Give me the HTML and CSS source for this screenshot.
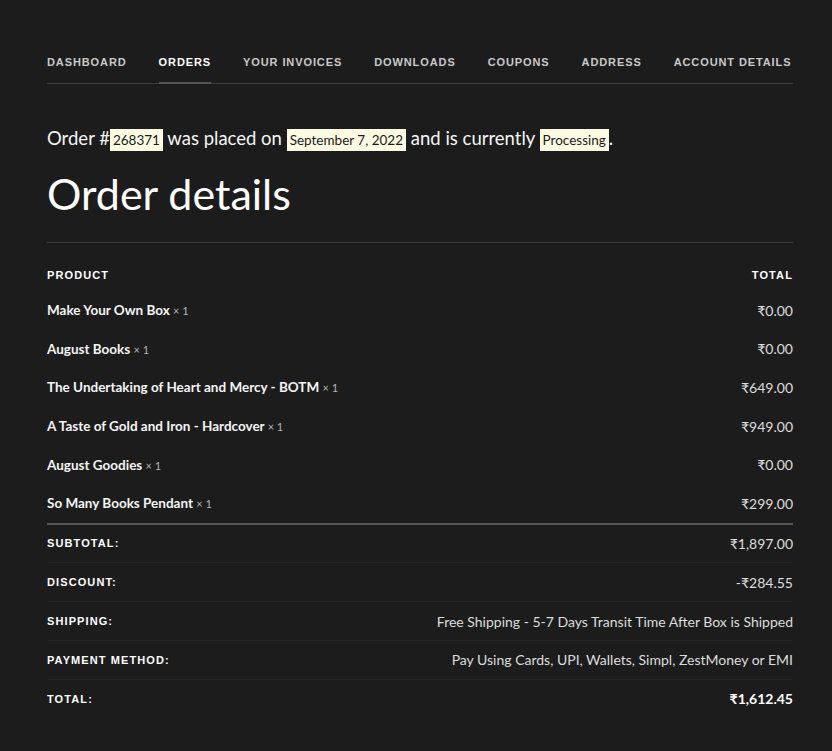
FILE: index.html
```html
<!DOCTYPE html>
<html lang="en">
<head>
<meta charset="utf-8">
<title>Order details</title>
<link rel="stylesheet" href="styles.css">
</head>
<body>
<div class="page">
  <nav class="tabs">
    <a class="tab">Dashboard</a>
    <a class="tab active">Orders</a>
    <a class="tab">Your Invoices</a>
    <a class="tab">Downloads</a>
    <a class="tab">Coupons</a>
    <a class="tab">Address</a>
    <a class="tab">Account details</a>
  </nav>

  <p class="status">Order #<mark>268371</mark> was placed on <mark>September 7, 2022</mark> and is currently <mark>Processing</mark>.</p>

  <h1 class="title">Order details</h1>

  <table class="order">
    <thead>
      <tr><th class="l">Product</th><th class="r">Total</th></tr>
    </thead>
    <tbody>
      <tr><td class="name">Make Your Own Box <span class="qty">× 1</span></td><td class="price">₹0.00</td></tr>
      <tr><td class="name">August Books <span class="qty">× 1</span></td><td class="price">₹0.00</td></tr>
      <tr><td class="name">The Undertaking of Heart and Mercy - BOTM <span class="qty">× 1</span></td><td class="price">₹649.00</td></tr>
      <tr><td class="name">A Taste of Gold and Iron - Hardcover <span class="qty">× 1</span></td><td class="price">₹949.00</td></tr>
      <tr><td class="name">August Goodies <span class="qty">× 1</span></td><td class="price">₹0.00</td></tr>
      <tr><td class="name">So Many Books Pendant <span class="qty">× 1</span></td><td class="price">₹299.00</td></tr>
    </tbody>
    <tfoot>
      <tr><th class="l">Subtotal:</th><td class="price">₹1,897.00</td></tr>
      <tr><th class="l">Discount:</th><td class="price">-₹284.55</td></tr>
      <tr><th class="l">Shipping:</th><td class="price">Free Shipping - 5-7 Days Transit Time After Box is Shipped</td></tr>
      <tr><th class="l">Payment method:</th><td class="price">Pay Using Cards, UPI, Wallets, Simpl, ZestMoney or EMI</td></tr>
      <tr><th class="l">Total:</th><td class="price grand">₹1,612.45</td></tr>
    </tfoot>
  </table>
</div>
</body>
</html>
```

FILE: styles.css
```css
html, body {
  margin: 0;
  padding: 0;
  background: #1c1c1c;
}

body {
  font-family: "Lato", "Liberation Sans", sans-serif;
  color: #f2f2f2;
}

.page {
  width: 746px;
  margin-left: 47px;
  padding-top: 54px;
}

.tabs {
  display: flex;
  gap: 32px;
  border-bottom: 1px solid #3d3d3d;
}

.tab {
  display: block;
  white-space: nowrap;
  font-family: "Liberation Sans", sans-serif;
  font-size: 11px;
  font-weight: 700;
  letter-spacing: 0.9px;
  text-transform: uppercase;
  color: #c9c9c9;
  padding: 2px 0 14px;
  margin-bottom: -1px;
  border-bottom: 2px solid transparent;
}

.tab.active {
  color: #ffffff;
  border-bottom-color: #555555;
}

.status {
  margin: 42px 0 0;
  font-size: 18.5px;
  line-height: 24px;
  color: #f5f5f5;
}

.status mark {
  background: #fffbe3;
  color: #1a1a1a;
  font-size: 13.5px;
  padding: 3px 3px;
}

.title {
  margin: 12px 0 0;
  font-size: 43px;
  font-weight: 400;
  line-height: 60px;
  color: #ffffff;
  padding-bottom: 18px;
  border-bottom: 1px solid #3a3a3a;
}

.order {
  width: 100%;
  border-collapse: collapse;
  margin-top: 20px;
}

.order th {
  font-family: "Liberation Sans", sans-serif;
  font-size: 11px;
  font-weight: 700;
  letter-spacing: 1.1px;
  text-transform: uppercase;
  color: #ffffff;
  padding: 0;
}

.order th.l { text-align: left; }
.order th.r { text-align: right; }

.order thead th {
  height: 24px;
  padding-bottom: 4px;
}

.order tbody td {
  height: 38.6px;
  padding: 0;
}

.name {
  font-size: 13.5px;
  font-weight: 700;
  color: #f4f4f4;
}

.qty {
  font-size: 11px;
  font-weight: 400;
  color: #b5b5b5;
}

.price {
  text-align: right;
  font-size: 14px;
  color: #dcdcdc;
}

.order tfoot tr {
  border-bottom: 1px solid #242424;
}

.order tfoot tr:first-child {
  border-top: 2px solid #555555;
}

.order tfoot tr:last-child {
  border-bottom: none;
}

.order tfoot th,
.order tfoot td {
  height: 37.8px;
  padding: 0;
}

.grand {
  font-weight: 700;
  color: #ffffff;
}
```
